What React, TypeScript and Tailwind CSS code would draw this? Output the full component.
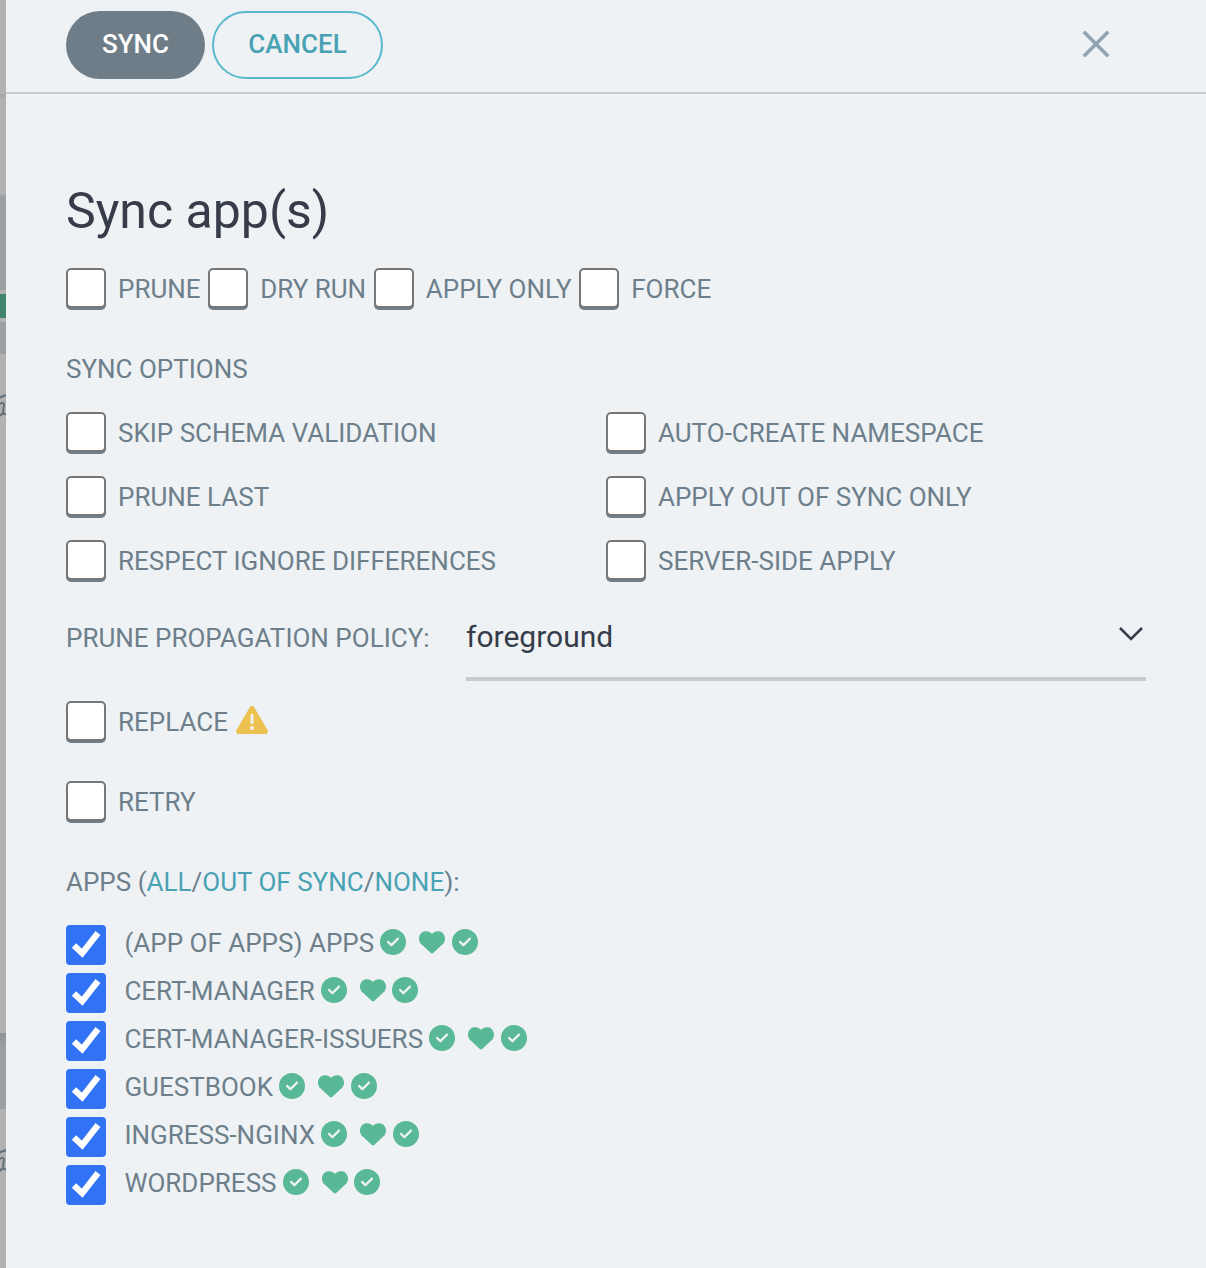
import React from "react";
import { FaCircleCheck, FaHeart, FaTriangleExclamation } from "react-icons/fa6";

function CheckBox() {
  return (
    <span className="block h-[40px] w-[40px] shrink-0 rounded-[5px] border-2 border-[#777777] bg-white shadow-[0_2px_0_#6d7f8b]" />
  );
}

function Option({ label, children }: { label: string; children?: React.ReactNode }) {
  return (
    <label className="flex h-[42px] items-start whitespace-nowrap">
      <CheckBox />
      <span className="ml-3 leading-[42px]">{label}</span>
      {children}
    </label>
  );
}

function Checked() {
  return (
    <span className="block h-[40px] w-[40px] shrink-0 rounded-[4px] bg-[#3273f6]">
      <svg viewBox="0 0 40 40" className="h-[40px] w-[40px]">
        <path d="M8 20.500L16.200 28.200L32 8" fill="none" stroke="#fff" strokeWidth="6.2" />
      </svg>
    </span>
  );
}

function AppRow({ name }: { name: string }) {
  return (
    <label className="flex h-12 items-start whitespace-nowrap">
      <Checked />
      <span className="ml-[18.4px] leading-[36px]">{name}</span>
      <span className="mt-[4.4px] ml-[6.2px] flex text-[26px] text-[#59b895]">
        <FaCircleCheck />
        <FaHeart className="ml-[13px]" />
        <FaCircleCheck className="ml-[6.4px]" />
      </span>
    </label>
  );
}

function Fragment({ className }: { className: string }) {
  return (
    <svg viewBox="0 0 6 26" className={className} fill="none" stroke="#63717b">
      <path d="M-1 5.500Q2 5 6 3" strokeWidth="2.4" />
      <path d="M-1 12.500Q4 9 4 13Q3 17 3.200 20Q4 23 6 22" strokeWidth="2" />
      <path d="M-1 24L3 21.500" strokeWidth="2.4" />
    </svg>
  );
}

function Backdrop() {
  return (
    <div className="flex w-[6px] shrink-0 flex-col overflow-hidden bg-[#b2b2b2]">
      <div className="mt-[94px] h-1 bg-[#a9a9a9]" />
      <div className="mt-[96px] h-[2px] bg-[#a9a9a9]" />
      <div className="h-[94px] bg-[#9aa0a2]" />
      <div className="mt-1 h-6 bg-[#40856c]" />
      <div className="mt-1 h-8 bg-[#9aa0a2]" />
      <Fragment className="mt-[38px] h-[26px] w-[6px] shrink-0" />
      <div className="mt-[615px] h-[76px] bg-linear-to-b from-[#8d9193] from-0% to-[#9aa0a2] to-15%" />
      <Fragment className="mt-[38px] h-[26px] w-[6px] shrink-0" />
    </div>
  );
}

const apps = ["(APP OF APPS) APPS", "CERT-MANAGER", "CERT-MANAGER-ISSUERS", "GUESTBOOK", "INGRESS-NGINX", "WORDPRESS"];

export default function App() {
  return (
    <div className="flex h-[1268px] w-[1206px] overflow-hidden bg-[#eef2f5] font-[Roboto,sans-serif] text-[26px] text-[#6d7f8b]">
      <Backdrop />
      <div className="flex-1">
        <header className="flex h-[94px] items-start border-b-2 border-[#c6cdd0] pt-[11px] pr-[97px] pl-[60px]">
          <button className="h-[68px] w-[139px] rounded-full bg-[#6f7d88] pb-[2px] font-medium text-white">SYNC</button>
          <button className="ml-[7px] h-[68px] w-[171px] rounded-full border-2 border-[#58b8cc] pb-[2px] font-medium text-[#49a2b3]">CANCEL</button>
          <svg viewBox="0 0 26 26" className="mt-5 ml-auto h-[26px] w-[26px] overflow-visible" stroke="#8fa4b1" strokeWidth="3.5">
            <path d="M0.800 0.800L25.200 25.200M25.200 0.800L0.800 25.200" />
          </svg>
        </header>
        <main className="px-[60px] pt-[86px]">
          <h1 className="h-[88px] text-[50px] leading-[62px] text-[#363c4a]">Sync app(s)</h1>
          <div className="flex gap-[7.6px]">
            <Option label="PRUNE" />
            <Option label="DRY RUN" />
            <Option label="APPLY ONLY" />
            <Option label="FORCE" />
          </div>
          <div className="mt-[38px] h-[64px] leading-[42px]">SYNC OPTIONS</div>
          <div className="grid grid-cols-2 gap-y-[22px]">
            <Option label="SKIP SCHEMA VALIDATION" />
            <Option label="AUTO-CREATE NAMESPACE" />
            <Option label="PRUNE LAST" />
            <Option label="APPLY OUT OF SYNC ONLY" />
            <Option label="RESPECT IGNORE DIFFERENCES" />
            <Option label="SERVER-SIDE APPLY" />
          </div>
          <div className="mt-[25px] flex h-[74px]">
            <span className="w-[400px] pt-[10px] leading-[42px]">PRUNE PROPAGATION POLICY:</span>
            <div className="flex flex-1 justify-between border-b-4 border-[#cacaca] text-[30px] text-[#363c4a]">
              <span className="pt-[9px] leading-[42px]">foreground</span>
              <svg viewBox="0 0 24 14" className="mt-5 mr-[3px] h-[14px] w-6" fill="none" stroke="#363c4a" strokeWidth="2.6">
                <path d="M1 1L12 12L23 1" />
              </svg>
            </div>
          </div>
          <div className="mt-5">
            <Option label="REPLACE">
              <FaTriangleExclamation className="mt-[2.500px] ml-2 text-[32px] text-[#ecc14f]" />
            </Option>
          </div>
          <div className="mt-[38px]">
            <Option label="RETRY" />
          </div>
          <div className="mt-[38px] leading-[42px]">
            APPS (<a className="text-[#49a2b3]">ALL</a>/<a className="text-[#49a2b3]">OUT OF SYNC</a>/<a className="text-[#49a2b3]">NONE</a>):
          </div>
          <div className="mt-[22px]">
            {apps.map((name) => (
              <AppRow key={name} name={name} />
            ))}
          </div>
        </main>
      </div>
    </div>
  );
}
